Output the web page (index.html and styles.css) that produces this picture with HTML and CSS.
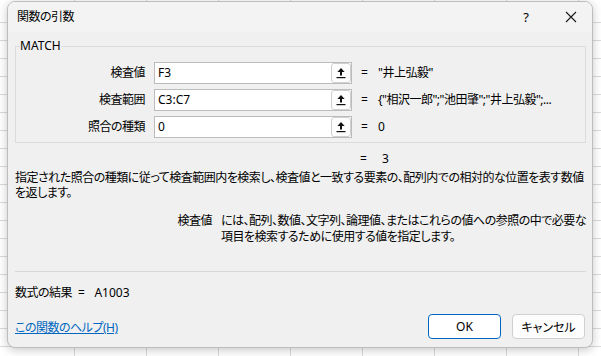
FILE: index.html
```html
<!DOCTYPE html>
<html lang="ja">
<head>
  <meta charset="utf-8">
  <title>関数の引数</title>
  <link rel="stylesheet" href="styles.css">
</head>
<body>
  <div class="dialog">
    <div class="titlebar">
      <span class="title">関数の引数</span>
      <span class="help">?</span>
      <span class="close">
        <svg width="12" height="12" viewBox="0 0 12 12"><path d="M1 1L11 11M11 1L1 11" stroke="#1a1a1a" stroke-width="1.1" fill="none"/></svg>
      </span>
    </div>

    <div class="content">
      <fieldset class="group">
        <legend>MATCH</legend>
        <div class="args">
          <span class="arg-name">検査値</span>
          <div class="field"><span class="field-text">F3</span><span class="ref-btn"><svg width="10" height="12" viewBox="0 0 10 12"><path d="M5 1L8.6 5H1.4Z" fill="#111"/><rect x="4" y="4.5" width="2" height="4" fill="#111"/><rect x="0.5" y="10" width="9" height="1.2" fill="#111"/></svg></span></div>
          <span class="eq">=</span>
          <span class="arg-value">"井上弘毅"</span>

          <span class="arg-name">検査範囲</span>
          <div class="field"><span class="field-text">C3:C7</span><span class="ref-btn"><svg width="10" height="12" viewBox="0 0 10 12"><path d="M5 1L8.6 5H1.4Z" fill="#111"/><rect x="4" y="4.5" width="2" height="4" fill="#111"/><rect x="0.5" y="10" width="9" height="1.2" fill="#111"/></svg></span></div>
          <span class="eq">=</span>
          <span class="arg-value">{"相沢一郎";"池田肇";"井上弘毅";...</span>

          <span class="arg-name">照合の種類</span>
          <div class="field"><span class="field-text">0</span><span class="ref-btn"><svg width="10" height="12" viewBox="0 0 10 12"><path d="M5 1L8.6 5H1.4Z" fill="#111"/><rect x="4" y="4.5" width="2" height="4" fill="#111"/><rect x="0.5" y="10" width="9" height="1.2" fill="#111"/></svg></span></div>
          <span class="eq">=</span>
          <span class="arg-value">0</span>
        </div>
      </fieldset>

      <div class="func-result"><span class="eq">=</span><span>3</span></div>

      <p class="description">指定された照合の種類に従って検査範囲内を検索し、検査値と一致する要素の、配列内での相対的な位置を表す数値<br>を返します。</p>

      <div class="arg-help">
        <span class="arg-help-name">検査値</span>
        <p class="arg-help-text">には、配列、数値、文字列、論理値、またはこれらの値への参照の中で必要な<br>項目を検索するために使用する値を指定します。</p>
      </div>

      <hr class="sep">

      <div class="formula-result">数式の結果<span class="result-eq">=</span><span class="latin">A1003</span></div>

      <div class="footer">
        <a href="#" class="help-link">この関数のヘルプ(H)</a>
        <div class="buttons">
          <button type="button" class="btn btn-primary">OK</button>
          <button type="button" class="btn">キャンセル</button>
        </div>
      </div>
    </div>
  </div>
</body>
</html>
```

FILE: styles.css
```css
html, body {margin: 0; padding: 0;}
body {
  width: 601px; height: 356px; overflow: hidden;
  background-color: #fff;
  background-image:
    repeating-linear-gradient(to right, transparent 0, transparent 71px, #dadada 71px, #dadada 72px),
    repeating-linear-gradient(to bottom, transparent 0, transparent 17px, #dadada 17px, #dadada 18px);
  background-position: 3px 0, 0 5px;
  font-family: "Noto Sans", "Noto Sans CJK JP", sans-serif;
  font-size: 12px; color: #000;
  font-feature-settings: "palt";
  letter-spacing: -0.5px;
}

.latin, .field-text, .group legend, .btn-primary, .help {letter-spacing: 0;}

.dialog {
  box-sizing: border-box;
  width: 586px;
  margin: 1px 0 0 7px;
  background: #f0f0f0;
  border: 1px solid #bdbdbd;
  border-radius: 8px;
  box-shadow: 0 2px 10px rgba(0,0,0,.22);
  overflow: hidden;
}

.titlebar {display: flex; align-items: center; height: 30px; background: #f3f3f3; padding-left: 9px;}
.title {flex: 1; line-height: 16px;}
.help {width: 12px; text-align: center; font-size: 13px; margin-right: 33px;}
.close {display: flex; width: 12px; margin-right: 15px;}

.content {padding: 0 6px 8px 7px;}

.group {margin: 7px 0 0; padding: 9px 0 4px; border: 1px solid #dcdcdc; min-width: 0;}
.group legend {padding: 0; margin-left: 4px; line-height: 14px;}

.args {display: grid; grid-template-columns: 138px 207px 17px 1fr; row-gap: 5px; align-items: center;}
.arg-name {text-align: right; padding-right: 9px; line-height: 16px;}
.field {
  box-sizing: border-box; width: 198px; height: 22px;
  display: flex; align-items: center;
  background: #fff; border: 1px solid #bcbcbc;
}
.field-text {flex: 1; padding-left: 3px; line-height: 16px;}
.ref-btn {
  box-sizing: border-box; width: 20px; height: 20px;
  display: flex; align-items: center; justify-content: center;
  background: #fdfdfd; border: 1px solid #cfcfcf; border-radius: 3px;
}
.eq {line-height: 16px;}
.arg-value {line-height: 16px; white-space: nowrap;}

.func-result {margin-top: 8px; padding-left: 345px; line-height: 16px; display: flex;}
.func-result .eq {width: 22px;}

.description {margin: 3px 0 0; line-height: 15px; white-space: nowrap;}

.arg-help {display: grid; grid-template-columns: 206px 1fr; margin-top: 13px; line-height: 16px;}
.arg-help-name {text-align: right; padding-right: 9px;}
.arg-help-text {margin: 0; white-space: nowrap;}

.sep {margin: 26px 0 0; border: 0; border-top: 1px solid #d8d8d8; height: 0;}

.formula-result {margin-top: 13px; line-height: 16px;}
.result-eq {margin: 0 10px 0 6px;}

.footer {display: flex; align-items: center; justify-content: space-between; margin-top: 13px;}
.help-link {color: #0067c0; text-decoration: underline; line-height: 16px; margin-top: 3px;}
.buttons {display: flex; gap: 11px; margin-right: 1px;}
.btn {
  box-sizing: border-box; width: 73px; height: 25px; padding: 0;
  font: inherit; color: #000;
  background: #fdfdfd; border: 1px solid #d0d0d0; border-radius: 4px;
}
.btn-primary {border-color: #0067c0; background: #fff;}
```
